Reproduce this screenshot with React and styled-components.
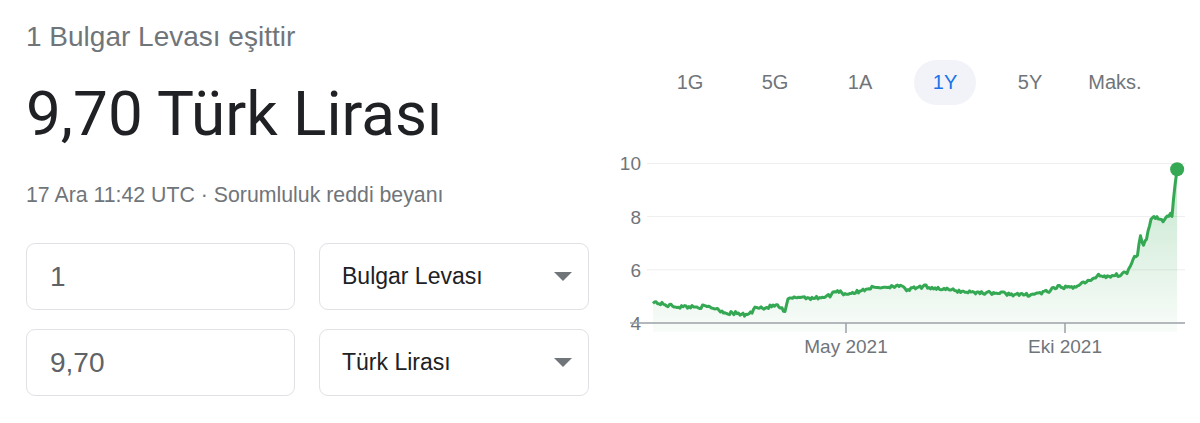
import React from 'react';
import styled, { createGlobalStyle } from 'styled-components';

const GlobalStyle = createGlobalStyle`
    body {
        margin: 0;
        background: #fff;
        font-family: "Liberation Sans", Arial, sans-serif;
    }
`

const Pagina = styled.div`
    display: flex;
    width: 1200px;
    height: 423px;
`
const ColunaEsquerda = styled.div`
    width: 563px;
    padding-left: 26px;
    display: flex;
    flex-direction: column;
`
const TextoTopo = styled.div`
    margin-top: 21px;
    font-size: 28px;
    line-height: 32px;
    color: #70757a;
`
const Valor = styled.div`
    margin-top: 27px;
    font-family: Roboto, "Liberation Sans", sans-serif;
    font-size: 62px;
    line-height: 68px;
    color: #202124;
`
const TextoData = styled.div`
    margin-top: 34px;
    font-size: 21.3px;
    line-height: 26px;
    color: #70757a;
`
const GradeConversao = styled.div`
    margin-top: 35px;
    display: grid;
    grid-template-columns: 269px 270px;
    grid-auto-rows: 67px;
    column-gap: 24px;
    row-gap: 19px;
`
const Caixa = styled.div`
    box-sizing: border-box;
    border: 1px solid #dfe1e5;
    border-radius: 9px;
    display: flex;
    align-items: center;
    justify-content: space-between;
    padding: 0 16px 0 ${props => props.recuo}px;
    font-size: ${props => props.tamanho}px;
    color: ${props => props.cor};
`
const Seta = styled.span`
    width: 0;
    height: 0;
    border-left: 9px solid transparent;
    border-right: 9px solid transparent;
    border-top: 9px solid #70757a;
`
const ColunaDireita = styled.div`
    width: 600px;
    margin-left: 11px;
    display: flex;
    flex-direction: column;
`
const Abas = styled.div`
    display: flex;
    gap: 23px;
    margin: 60px 0 0 59px;
`
const Aba = styled.div`
    width: 62px;
    height: 45px;
    border-radius: 23px;
    display: flex;
    align-items: center;
    justify-content: center;
    font-size: 20px;
    color: ${props => props.ativa ? '#1a73e8' : '#70757a'};
    background: ${props => props.ativa ? '#f1f3f8' : 'transparent'};
`
const Grafico = styled.svg`
    display: block;
    margin-top: 35px;
    overflow: visible;
`

const abas = ['1G', '5G', '1A', '1Y', '5Y', 'Maks.'];

// pontos de referencia (x da imagem, valor)
const marcos = [
    [140, 4.80], [175, 4.67], [210, 4.61], [280, 4.61], [305, 4.55], [330, 4.38],
    [360, 4.36], [380, 4.29], [400, 4.42], [410, 4.64], [430, 4.55], [460, 4.67],
    [475, 4.55], [485, 4.36], [490, 4.86], [520, 4.99], [560, 4.93], [600, 5.02],
    [620, 5.24], [640, 5.09], [680, 5.18], [700, 5.31], [760, 5.37], [780, 5.43],
    [800, 5.24], [850, 5.37], [900, 5.27], [950, 5.18], [1000, 5.14], [1050, 5.12],
    [1100, 5.05], [1130, 5.08], [1170, 5.18], [1200, 5.37], [1230, 5.31], [1260, 5.50],
    [1290, 5.63], [1300, 5.82], [1320, 5.75], [1360, 5.82], [1380, 5.94], [1395, 6.51],
    [1405, 6.58], [1412, 7.34], [1420, 6.89], [1430, 7.28], [1440, 7.91], [1455, 7.97],
    [1470, 7.84], [1490, 8.10], [1495, 8.03], [1500, 8.92], [1508, 9.78],
].map(([X, v]) => [30 + (X - 80) / 2.61, v]);

const yDe = v => 183 - (v - 4) * 26.6;

function aleatorio(semente) {
    let s = semente;
    return () => {
        s = (s * 16807) % 2147483647;
        return s / 2147483647;
    };
}

function montarPontos() {
    const rnd = aleatorio(42);
    const pts = [];
    const x0 = marcos[0][0];
    const x1 = marcos[marcos.length - 1][0];
    let i = 0;
    for (let x = x0; x < x1 - 2; x += 1.5) {
        while (marcos[i + 1][0] < x) i++;
        const [xa, va] = marcos[i];
        const [xb, vb] = marcos[i + 1];
        const v = va + (vb - va) * (x - xa) / (xb - xa);
        const ruido = (rnd() - 0.5) * (x > 560 ? 0.18 : 0.13);
        pts.push([x, yDe(v + ruido)]);
    }
    pts.push([x1, yDe(marcos[marcos.length - 1][1])]);
    return pts;
}

const pontos = montarPontos();
const linha = pontos.map(([x, y], k) => `${k ? 'L' : 'M'}${x.toFixed(1)},${y.toFixed(1)}`).join(' ');
const area = `${linha} L${pontos[pontos.length - 1][0].toFixed(1)},192 L${pontos[0][0].toFixed(1)},192 Z`;
const fim = pontos[pontos.length - 1];

function App() {
    return (
        <Pagina>
            <GlobalStyle />
            <ColunaEsquerda>
                <TextoTopo>1 Bulgar Levası eşittir</TextoTopo>
                <Valor>9,70 Türk Lirası</Valor>
                <TextoData>17 Ara 11:42 UTC · Sorumluluk reddi beyanı</TextoData>
                <GradeConversao>
                    <Caixa recuo={23} tamanho={28} cor="#5f6368">1</Caixa>
                    <Caixa recuo={22} tamanho={23} cor="#202124">Bulgar Levası<Seta /></Caixa>
                    <Caixa recuo={23} tamanho={28} cor="#5f6368">9,70</Caixa>
                    <Caixa recuo={22} tamanho={23} cor="#202124">Türk Lirası<Seta /></Caixa>
                </GradeConversao>
            </ColunaEsquerda>
            <ColunaDireita>
                <Abas>
                    {abas.map(a => <Aba key={a} ativa={a === '1Y'}>{a}</Aba>)}
                </Abas>
                <Grafico width="600" height="230" viewBox="0 0 600 230">
                    <defs>
                        <linearGradient id="preench" x1="0" y1="20" x2="0" y2="192" gradientUnits="userSpaceOnUse">
                            <stop offset="0" stopColor="#34a853" stopOpacity="0.3" />
                            <stop offset="1" stopColor="#34a853" stopOpacity="0.03" />
                        </linearGradient>
                    </defs>
                    {[10, 8, 6].map(v => (
                        <line key={v} x1="47" x2="585" y1={yDe(v)} y2={yDe(v)} stroke="#eeeeee" strokeWidth="1" />
                    ))}
                    <g fill="#70757a" fontSize="19" fontFamily="Liberation Sans, Arial, sans-serif">
                        {[10, 8, 6, 4].map(v => (
                            <text key={v} x="41" y={yDe(v) + 7} textAnchor="end">{v}</text>
                        ))}
                        <text x="246" y="213" textAnchor="middle">May 2021</text>
                        <text x="465" y="213" textAnchor="middle">Eki 2021</text>
                    </g>
                    <path d={area} fill="url(#preench)" />
                    <line x1="30" x2="585" y1="183" y2="183" stroke="#9aa0a6" strokeWidth="1.5" />
                    <line x1="246" x2="246" y1="183" y2="193" stroke="#9aa0a6" strokeWidth="1.5" />
                    <line x1="465" x2="465" y1="183" y2="193" stroke="#9aa0a6" strokeWidth="1.5" />
                    <path d={linha} fill="none" stroke="#34a853" strokeWidth="3" strokeLinejoin="round" />
                    <circle cx={fim[0]} cy={fim[1]} r="7" fill="#34a853" />
                </Grafico>
            </ColunaDireita>
        </Pagina>
    );
}

export default App;
